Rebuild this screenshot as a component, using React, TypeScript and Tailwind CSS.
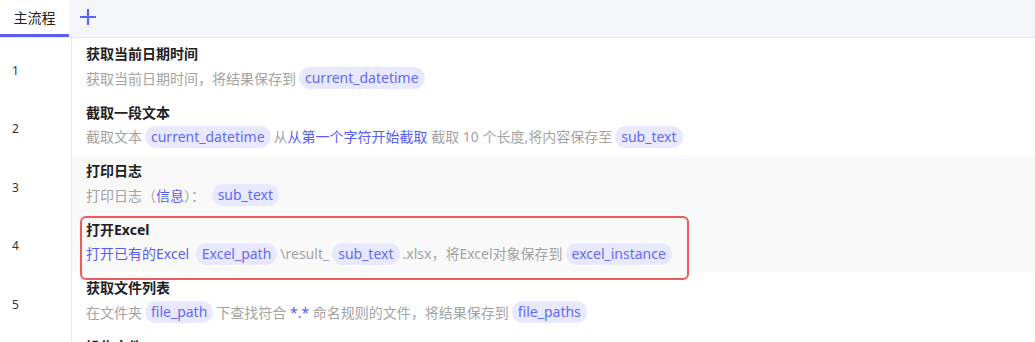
import React from 'react';

type Part = { t: string; k?: 'g' | 'b' | 'p' };

const rows: { title: string; parts: Part[]; bg?: boolean; selected?: boolean }[] = [
  {
    title: '获取当前日期时间',
    parts: [{ t: '获取当前日期时间，将结果保存到' }, { t: 'current_datetime', k: 'p' }],
  },
  {
    title: '截取一段文本',
    parts: [
      { t: '截取文本' },
      { t: 'current_datetime', k: 'p' },
      { t: '从' },
      { t: '从第一个字符开始截取', k: 'b' },
      { t: ' 截取 10 个长度,将内容保存至' },
      { t: 'sub_text', k: 'p' },
    ],
  },
  {
    title: '打印日志',
    bg: true,
    parts: [{ t: '打印日志（' }, { t: '信息', k: 'b' }, { t: '）： ' }, { t: 'sub_text', k: 'p' }],
  },
  {
    title: '打开Excel',
    bg: true,
    selected: true,
    parts: [
      { t: '打开已有的Excel ', k: 'b' },
      { t: 'Excel_path', k: 'p' },
      { t: '\\result_' },
      { t: 'sub_text', k: 'p' },
      { t: '.xlsx，将Excel对象保存到' },
      { t: 'excel_instance', k: 'p' },
    ],
  },
  {
    title: '获取文件列表',
    parts: [
      { t: '在文件夹' },
      { t: 'file_path', k: 'p' },
      { t: '下查找符合 ' },
      { t: '*.*', k: 'b' },
      { t: ' 命名规则的文件，将结果保存到' },
      { t: 'file_paths', k: 'p' },
    ],
  },
  {
    title: '操作文件',
    parts: [{ t: '' }],
  },
];

const PlusIcon = () => (
  <svg width="18" height="18" viewBox="0 0 18 18" fill="none">
    <path d="M9 1v16M1 9h16" stroke="#5b63f0" strokeWidth="2.2" />
  </svg>
);

export default function App() {
  return (
    <div
      className="w-[1035px] h-[342px] overflow-hidden bg-white"
      style={{ fontFamily: '"Noto Sans", "Noto Sans CJK SC", sans-serif' }}
    >
      {/* tab bar */}
      <div className="flex h-[38px] bg-[#f4f6fa] border-b border-[#e6e8ec]">
        <div className="w-[69px] h-[37px] bg-white border-b-[3px] border-[#5b5ff5] flex items-center justify-center text-[14px] text-[#222]">
          主流程
        </div>
        <div className="w-[38px] flex items-center justify-center pb-[3px]">
          <PlusIcon />
        </div>
      </div>

      {/* steps */}
      <div className="flex flex-col">
        {rows.map((r, i) => (
          <div key={i} className="flex h-[58.5px] shrink-0">
            <div className="w-[71px] shrink-0 flex items-center pl-[12px] pt-[7px] text-[12px] text-[#333]">
              {i < 5 ? i + 1 : ''}
            </div>
            <div
              className={`relative flex-1 border-l border-[#e8e8e8] pl-[14px] pt-[6px] ${
                r.bg ? 'bg-[#f9f9f9]' : ''
              }`}
            >
              <div className="text-[14px] leading-[20px] font-bold text-[#222]">{r.title}</div>
              <div className="flex items-center h-[28px] text-[14px] whitespace-pre">
                {r.parts.map((p, j) =>
                  p.k === 'p' ? (
                    <span
                      key={j}
                      className="mx-[3px] px-[6px] h-[22px] leading-[22px] rounded-full bg-[#e8e9ff] text-[#6469f6]"
                    >
                      {p.t}
                    </span>
                  ) : (
                    <span key={j} className={p.k === 'b' ? 'text-[#575ef2]' : 'text-[#a3a3a3]'}>
                      {p.t}
                    </span>
                  )
                )}
              </div>
              {r.selected && (
                <div className="absolute left-[8px] top-[2px] w-[609px] h-[64px] border-2 border-[#ef5a5a] rounded-[6px] pointer-events-none" />
              )}
            </div>
          </div>
        ))}
      </div>
    </div>
  );
}
